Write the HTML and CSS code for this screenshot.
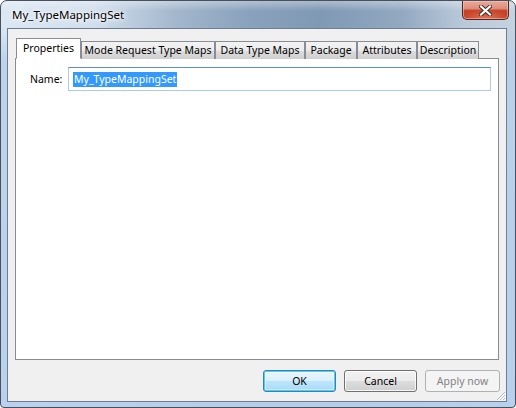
FILE: index.html
```html
<!DOCTYPE html>
<html>
<head>
<meta charset="utf-8">
<link rel="stylesheet" href="styles.css">
</head>
<body>
<div class="window">
  <div class="titlebar">
    <span class="title">My_TypeMappingSet</span>
    <div class="close">
      <svg width="13" height="11" viewBox="0 0 13 11">
        <path d="M2 1.5 L11 9.5 M11 1.5 L2 9.5" stroke="#3a2a28" stroke-width="4" stroke-linecap="square" fill="none"/>
        <path d="M2 1.5 L11 9.5 M11 1.5 L2 9.5" stroke="#ffffff" stroke-width="2.2" stroke-linecap="square" fill="none"/>
      </svg>
    </div>
  </div>
  <div class="client">
    <div class="tabs">
      <div class="tab active w-prop">Properties</div>
      <div class="tab w-mode">Mode Request Type Maps</div>
      <div class="tab w-data">Data Type Maps</div>
      <div class="tab w-pkg">Package</div>
      <div class="tab w-attr">Attributes</div>
      <div class="tab w-desc">Description</div>
    </div>
    <div class="panel">
      <div class="field">
        <span class="label">Name:</span>
        <div class="input"><span class="sel">My_TypeMappingSet</span></div>
      </div>
    </div>
    <div class="buttons">
      <div class="btn default">OK</div>
      <div class="btn">Cancel</div>
      <div class="btn disabled">Apply now</div>
    </div>
    <svg class="grip" width="10" height="10" viewBox="0 0 10 10">
      <path d="M9 1 L1 9 M9 4 L4 9 M9 7 L7 9" stroke="#b9bdc2" stroke-width="1" fill="none"/>
      <path d="M10 2 L2 10 M10 5 L5 10 M10 8 L8 10" stroke="#ffffff" stroke-width="1" fill="none"/>
    </svg>
  </div>
</div>
</body>
</html>
```
FILE: styles.css
```css
* { box-sizing: border-box; }
html, body { margin: 0; padding: 0; }
body {
  width: 516px;
  height: 408px;
  overflow: hidden;
  font-family: "Noto Sans", Lato, sans-serif;
  font-size: 10.5px;
  color: #000;
  background: #fff;
}
.window {
  width: 516px;
  height: 408px;
  border: 1px solid #47505c;
  border-radius: 7px 7px 4px 4px;
  padding: 0 8px 5px 6px;
  display: flex;
  flex-direction: column;
  background:
    linear-gradient(to bottom, rgba(255,255,255,0.35) 0, rgba(255,255,255,0) 10px),
    linear-gradient(to bottom, rgba(190,212,236,0) 0, rgba(190,212,236,0) 26px, rgba(186,209,235,0.9) 60px, rgba(184,208,236,0.95) 100%),
    linear-gradient(to right, #dbe7f3 0%, #d0deed 18%, #a3b7cc 34%, #8aa2bd 48%, #7f98b4 62%, #93a9c1 78%, #b9c9da 90%, #c5d2e0 100%);
  position: relative;
}
.titlebar {
  height: 27px;
  flex: none;
  display: flex;
  justify-content: space-between;
  align-items: flex-start;
}
.title {
  margin-left: 5px;
  margin-top: 6px;
  font-size: 11.5px;
  line-height: 16px;
  text-shadow: 0 0 6px #fff, 0 0 10px #fff, 0 0 3px #fff;
}
.close {
  margin-top: 0;
  margin-right: -2px;
  width: 47px;
  height: 19px;
  border: 1px solid #4b2a24;
  border-top: none;
  border-radius: 0 0 5px 5px;
  background:
    radial-gradient(ellipse 60% 50% at 50% 100%, rgba(240,120,90,0.9), rgba(240,120,90,0)),
    linear-gradient(to bottom, #e9aa9b 0%, #db8b78 45%, #c8462c 50%, #b9381f 100%);
  box-shadow: inset 0 0 0 1px rgba(255,200,190,0.55);
  display: flex;
  align-items: center;
  justify-content: center;
}
.client {
  flex: 1;
  border: 1px solid #6e7e90;
  background: #f0f0f0;
  padding: 9px 7px 9px 7px;
  display: flex;
  flex-direction: column;
  position: relative;
}
.tabs {
  display: flex;
  align-items: flex-end;
  height: 21px;
  flex: none;
  position: relative;
  z-index: 2;
  margin-bottom: -1px;
}
.tab {
  height: 18px;
  border: 1px solid #898c95;
  border-bottom: none;
  background: linear-gradient(to bottom, #f3f3f3 0%, #ebebeb 50%, #dddddd 52%, #cfcfcf 100%);
  text-align: center;
  line-height: 16px;
  white-space: nowrap;
  flex: none;
}
.tab.active {
  height: 21px;
  background: #fff;
  line-height: 18px;
  margin-left: 1px;
  border-bottom: 1px solid #fff;
}
.w-prop { width: 65px; }
.w-mode { width: 134px; }
.w-data { width: 90px; }
.w-pkg { width: 52px; }
.w-attr { width: 60px; }
.w-desc { width: 62px; }
.panel {
  height: 302px;
  flex: none;
  border: 1px solid #898c95;
  background: #fff;
  padding: 8px 7px 0 14px;
}
.field {
  display: flex;
  align-items: center;
}
.label {
  width: 38px;
  flex: none;
}
.input {
  flex: 1;
  height: 24px;
  border: 1px solid #abcbe8;
  border-top-color: #5f8fbf;
  background: #fff;
  padding-left: 4px;
  display: flex;
  align-items: center;
}
.sel {
  background: #3399ff;
  color: #fff;
  line-height: 15px;
  padding: 0 1px;
}
.buttons {
  margin-top: 10px;
  display: flex;
  justify-content: flex-end;
  gap: 8px;
  margin-right: -1px;
}
.btn {
  width: 73px;
  height: 22px;
  border: 1px solid #707070;
  border-radius: 3px;
  background: linear-gradient(to bottom, #f2f2f2 0%, #ebebeb 50%, #dddddd 51%, #cfcfcf 100%);
  box-shadow: inset 0 0 0 1px rgba(255,255,255,0.8);
  text-align: center;
  line-height: 20px;
}
.btn.default {
  border-color: #3c7fb1;
  background: linear-gradient(to bottom, #eaf6fd 0%, #d9f0fc 50%, #bee6fd 51%, #a7d9f5 100%);
  box-shadow: inset 0 0 0 1px #48d0f8, inset 0 0 0 2px rgba(255,255,255,0.4);
}
.btn.disabled {
  width: 75px;
  border-color: #adb2b5;
  background: #f4f4f4;
  box-shadow: none;
  color: #838383;
}
.grip {
  position: absolute;
  right: 0;
  bottom: 0;
}
```
